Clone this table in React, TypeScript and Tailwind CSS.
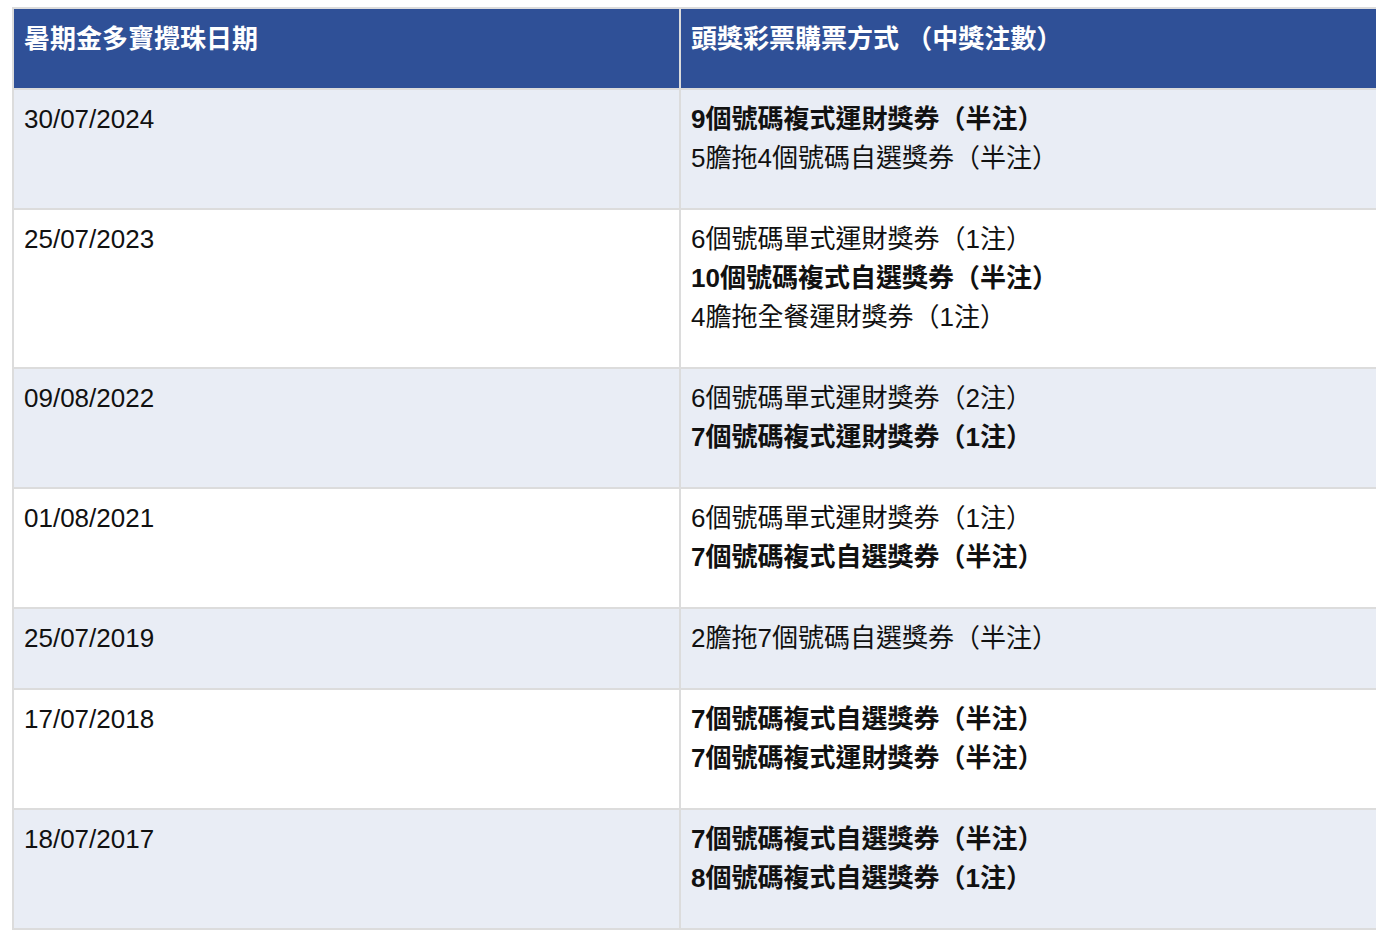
const rows: { date: string; lines: { text: string; bold?: boolean }[] }[] = [
  {
    date: "30/07/2024",
    lines: [
      { text: "9個號碼複式運財獎券（半注）", bold: true },
      { text: "5膽拖4個號碼自選獎券（半注）" },
    ],
  },
  {
    date: "25/07/2023",
    lines: [
      { text: "6個號碼單式運財獎券（1注）" },
      { text: "10個號碼複式自選獎券（半注）", bold: true },
      { text: "4膽拖全餐運財獎券（1注）" },
    ],
  },
  {
    date: "09/08/2022",
    lines: [
      { text: "6個號碼單式運財獎券（2注）" },
      { text: "7個號碼複式運財獎券（1注）", bold: true },
    ],
  },
  {
    date: "01/08/2021",
    lines: [
      { text: "6個號碼單式運財獎券（1注）" },
      { text: "7個號碼複式自選獎券（半注）", bold: true },
    ],
  },
  {
    date: "25/07/2019",
    lines: [{ text: "2膽拖7個號碼自選獎券（半注）" }],
  },
  {
    date: "17/07/2018",
    lines: [
      { text: "7個號碼複式自選獎券（半注）", bold: true },
      { text: "7個號碼複式運財獎券（半注）", bold: true },
    ],
  },
  {
    date: "18/07/2017",
    lines: [
      { text: "7個號碼複式自選獎券（半注）", bold: true },
      { text: "8個號碼複式自選獎券（1注）", bold: true },
    ],
  },
];

export default function App() {
  return (
    <div
      className="w-full h-[942px] overflow-hidden bg-white pt-[7px] pl-[12px] text-[26px] leading-[39px] text-[#111]"
      style={{ fontFamily: '"Liberation Sans", "Noto Sans CJK TC", sans-serif' }}
    >
      <div className="w-[1420px] border-t-2 border-l-2 border-[#dcdcdc]">
        {/* header */}
        <div className="flex bg-[#2f5097] border-b-2 border-[#dcdcdc] text-white font-bold">
          <div className="w-[667px] shrink-0 border-r-2 border-[#dcdcdc] px-[10px] pt-[11px] pb-[29px]">
            暑期金多寶攪珠日期
          </div>
          <div className="flex-1 px-[10px] pt-[11px] pb-[29px]">
            頭獎彩票購票方式 （中獎注數）
          </div>
        </div>

        {rows.map((row, i) => (
          <div
            key={row.date}
            className={`flex border-b-2 border-[#dcdcdc] ${
              i % 2 === 0 ? "bg-[#e9edf5]" : "bg-white"
            }`}
          >
            <div className="w-[667px] shrink-0 border-r-2 border-[#dcdcdc] px-[10px] pt-[10px] pb-[30px]">
              {row.date}
            </div>
            <div className="flex-1 px-[10px] pt-[10px] pb-[30px]">
              {row.lines.map((line, j) => (
                <div key={j} className={line.bold ? "font-bold" : ""}>
                  {line.text}
                </div>
              ))}
            </div>
          </div>
        ))}
      </div>
    </div>
  );
}
